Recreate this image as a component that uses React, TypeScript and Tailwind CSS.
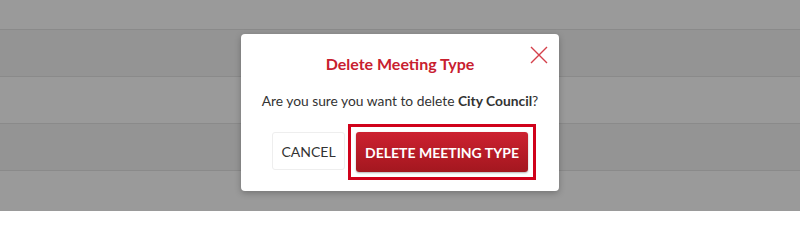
const rows = ["h-[29px]", "h-[47px]", "h-[47px]", "h-[47px]", "h-[41px]"]

function CloseIcon() {
  return (
    <svg width="18" height="18" viewBox="0 0 18 18" fill="none" stroke="currentColor" strokeWidth="1.4">
      <path d="M1 1L17 17M17 1L1 17" />
    </svg>
  )
}

function DeleteMeetingTypeModal() {
  return (
    <div className="relative w-[318px] rounded-[4px] bg-white px-3 pt-[18px] pb-[19px] shadow-[0_2px_6px_rgba(0,0,0,0.25)]">
      <button
        type="button"
        aria-label="Close"
        className="absolute top-[12px] right-[11px] text-[#d4404b]"
      >
        <CloseIcon />
      </button>
      <h2 className="text-center text-[16px] leading-6 font-bold text-[#c8202f]">
        Delete Meeting Type
      </h2>
      <p className="mt-[15px] text-center text-[13.8px] leading-5 whitespace-nowrap text-[#333]">
        Are you sure you want to delete <span className="font-bold">City Council</span>?
      </p>
      <div className="mt-[21px] flex items-start justify-center gap-[11px]">
        <button
          type="button"
          className="h-[38px] w-[73px] rounded-[3px] border border-[#eeeeee] bg-white text-[14px] text-[#333]"
        >
          CANCEL
        </button>
        <div className="-m-[8px] border-[3px] border-[#d0021b] p-[5px]">
          <button
            type="button"
            className="block h-[40px] w-[172px] rounded-[3px] bg-gradient-to-b from-[#cd2130] to-[#a3171f] text-[14px] font-bold text-white shadow-[0_1px_2px_rgba(0,0,0,0.3)]"
          >
            DELETE MEETING TYPE
          </button>
        </div>
      </div>
    </div>
  )
}

export default function App() {
  return (
    <div className="relative h-[211px] w-[800px] overflow-hidden bg-[#9a9a9a] font-['Lato',sans-serif]">
      {rows.map((h, i) => (
        <div
          key={i}
          className={`${h} ${i % 2 === 1 ? "bg-[#949494]" : "bg-[#9a9a9a]"} ${i > 0 ? "border-t border-[#8a8a8a]" : ""}`}
        />
      ))}
      <div className="absolute inset-0 flex items-start justify-center pt-[34px]">
        <DeleteMeetingTypeModal />
      </div>
    </div>
  )
}
